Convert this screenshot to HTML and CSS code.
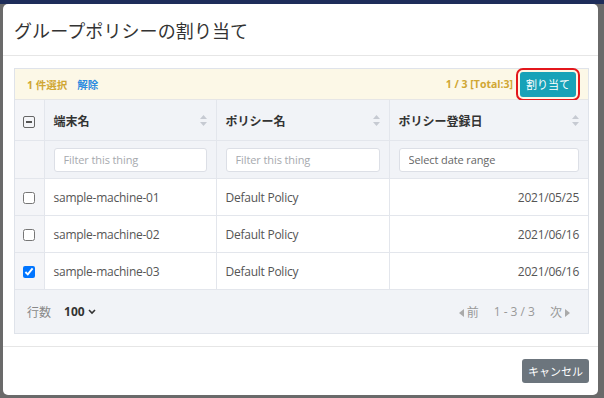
FILE: index.html
```html
<!DOCTYPE html>
<html lang="ja">

<head>
  <meta charset="UTF-8">
  <meta name="viewport" content="width=device-width, initial-scale=1.0">
  <title>グループポリシーの割り当て</title>
  <link rel="stylesheet" href="styles.css">
</head>

<body>
  <div class="modal">
    <div class="modal-header">
      <h4>グループポリシーの割り当て</h4>
    </div>

    <div class="modal-body">
      <div class="grid">
        <div class="toolbar">
          <span class="sel">1 件選択</span>
          <a class="clear">解除</a>
          <span class="count">1 / 3 [Total:3]</span>
          <button class="btn-assign">割り当て</button>
        </div>

        <table>
          <colgroup>
            <col class="c-chk">
            <col class="c-name">
            <col class="c-policy">
            <col>
          </colgroup>
          <thead>
            <tr class="head">
              <th class="chk"><span class="minus"></span></th>
              <th>端末名<svg class="sort" width="7" height="11" viewBox="0 0 7 11"><path d="M3.5 0L7 4H0z M3.5 11L7 7H0z" /></svg></th>
              <th>ポリシー名<svg class="sort" width="7" height="11" viewBox="0 0 7 11"><path d="M3.5 0L7 4H0z M3.5 11L7 7H0z" /></svg></th>
              <th>ポリシー登録日<svg class="sort" width="7" height="11" viewBox="0 0 7 11"><path d="M3.5 0L7 4H0z M3.5 11L7 7H0z" /></svg></th>
            </tr>
            <tr class="filters">
              <th class="chk"></th>
              <th><input type="text" placeholder="Filter this thing"></th>
              <th><input type="text" placeholder="Filter this thing"></th>
              <th><input type="text" placeholder="Select date range"></th>
            </tr>
          </thead>
          <tbody>
            <tr>
              <td class="chk"><input type="checkbox"></td>
              <td>sample-machine-01</td>
              <td>Default Policy</td>
              <td class="date">2021/05/25</td>
            </tr>
            <tr>
              <td class="chk"><input type="checkbox"></td>
              <td>sample-machine-02</td>
              <td>Default Policy</td>
              <td class="date">2021/06/16</td>
            </tr>
            <tr>
              <td class="chk"><input type="checkbox" checked></td>
              <td>sample-machine-03</td>
              <td>Default Policy</td>
              <td class="date">2021/06/16</td>
            </tr>
          </tbody>
        </table>

        <div class="pager">
          <span class="rows-lbl">行数</span>
          <span class="rows-val">100<svg width="8" height="6" viewBox="0 0 8 6"><path d="M1 1l3 3 3-3" fill="none" stroke="#333" stroke-width="1.6" /></svg></span>
          <span class="nav">
            <span><svg width="5" height="8" viewBox="0 0 5 8"><path d="M5 0v8L0 4z" /></svg>前</span>
            <span class="range">1 - 3 / 3</span>
            <span>次<svg width="5" height="8" viewBox="0 0 5 8"><path d="M0 0v8l5-4z" /></svg></span>
          </span>
        </div>
      </div>
    </div>

    <div class="modal-footer">
      <button class="btn-cancel">キャンセル</button>
    </div>
  </div>
</body>

</html>
```

FILE: styles.css
```css
body {
  margin: 0;
  height: 398px;
  padding: 4px 6px 3px 3px;
  box-sizing: border-box;
  background: linear-gradient(#1e2d5a 0 4px, #6a6a6a 4px);
  font-family: "Open Sans", "Noto Sans CJK JP", sans-serif;
  color: #555;
}

.modal {
  height: 100%;
  background: #fff;
  border-radius: 5px;
  display: flex;
  flex-direction: column;
}

.modal-header {
  height: 51px;
  padding: 0 11px;
  display: flex;
  align-items: center;
  border-bottom: 1px solid #e6e6e6;
}

.modal-header h4 {
  margin: 0;
  font-family: "Noto Sans CJK JP", sans-serif;
  font-weight: 400;
  font-size: 18px;
  color: #333;
  letter-spacing: 0.1px;
}

.modal-body {
  padding: 12px 9px 12px 11px;
  border-bottom: 1px solid #e6e6e6;
}

.grid {
  border: 1px solid #dfe3ea;
}

.toolbar {
  height: 30px;
  background: #fcf8e7;
  display: flex;
  align-items: center;
  padding: 0 12px 0 12px;
  font-size: 10.5px;
  font-weight: 700;
  border-bottom: 1px solid #e6e6e6;
}

.sel {
  color: #d0a733;
}

.clear {
  color: #2d8be0;
  margin-left: 10px;
}

.count {
  margin-left: auto;
  color: #d0a733;
  margin-right: 7px;
}

.btn-assign {
  height: 25px;
  padding: 0 6px;
  border: none;
  border-radius: 3px;
  background: #17a2b8;
  color: #fff;
  font-family: "Noto Sans CJK JP", sans-serif;
  font-size: 11px;
  outline: 2px solid #e3171c;
  outline-offset: 2px;
}

table {
  width: 100%;
  border-collapse: collapse;
  table-layout: fixed;
  font-size: 12px;
}

col.c-chk {
  width: 29px;
}

col.c-name {
  width: 172px;
}

col.c-policy {
  width: 173px;
}

th,
td {
  border: 1px solid #e3e6ec;
  padding: 0 9px;
  text-align: left;
}

tr:first-child>th {
  border-top: none;
}

th:first-child,
td:first-child {
  border-left: none;
}

th:last-child,
td:last-child {
  border-right: none;
}

tbody tr:last-child td {
  border-bottom: none;
}

.head th {
  height: 40px;
  background: #f1f3f7;
  color: #333;
  font-weight: 700;
  font-family: "Noto Sans CJK JP", sans-serif;
  position: relative;
}

.sort {
  position: absolute;
  right: 9px;
  top: 15px;
  fill: #c6cad2;
}

.filters th {
  height: 37px;
  background: #f1f3f7;
}

.filters input {
  width: 100%;
  box-sizing: border-box;
  height: 24px;
  border: 1px solid #dcdfe6;
  border-radius: 3px;
  padding: 0 9px;
  font-family: "Open Sans", sans-serif;
  font-size: 11px;
  letter-spacing: -0.1px;
  background: #fff;
}

.filters input::placeholder {
  color: #a6a9ae;
}

.filters th:nth-child(4) input::placeholder {
  color: #666;
}

td {
  height: 36px;
  background: #fff;
  letter-spacing: -0.25px;
}

td.chk,
th.chk {
  padding: 0;
  text-align: center;
  background: #f4f5f8;
}

td.chk input {
  margin: 0;
  width: 12px;
  height: 12px;
  vertical-align: middle;
}

.minus {
  display: inline-block;
  width: 10px;
  height: 10px;
  border: 1px solid #666;
  border-radius: 2px;
  position: relative;
  vertical-align: middle;
}

.minus::after {
  content: "";
  position: absolute;
  left: 2px;
  right: 2px;
  top: 4px;
  height: 1.5px;
  background: #555;
}

td.date {
  text-align: right;
}

.pager {
  height: 43px;
  background: #f1f3f7;
  border-top: 1px solid #e3e6ec;
  display: flex;
  align-items: center;
  padding: 0 15px 0 12px;
  font-family: "Noto Sans CJK JP", sans-serif;
  font-size: 12px;
  color: #888;
}

.rows-val {
  margin-left: 13px;
  font-family: "Open Sans", sans-serif;
  font-weight: 700;
  color: #333;
}

.rows-val svg {
  margin-left: 3px;
  vertical-align: 1px;
}

.nav {
  margin-left: auto;
  display: flex;
  gap: 15px;
  color: #999;
}

.nav svg {
  fill: #aaa;
  margin: 0 3px;
}

.range {
  font-family: "Open Sans", sans-serif;
}

.modal-footer {
  flex: 1;
  display: flex;
  align-items: center;
  justify-content: flex-end;
  padding: 0 9px;
}

.btn-cancel {
  height: 24px;
  padding: 0 6px;
  border: none;
  border-radius: 3px;
  background: #6c757d;
  color: #fff;
  font-family: "Noto Sans CJK JP", sans-serif;
  font-size: 11px;
}
```
